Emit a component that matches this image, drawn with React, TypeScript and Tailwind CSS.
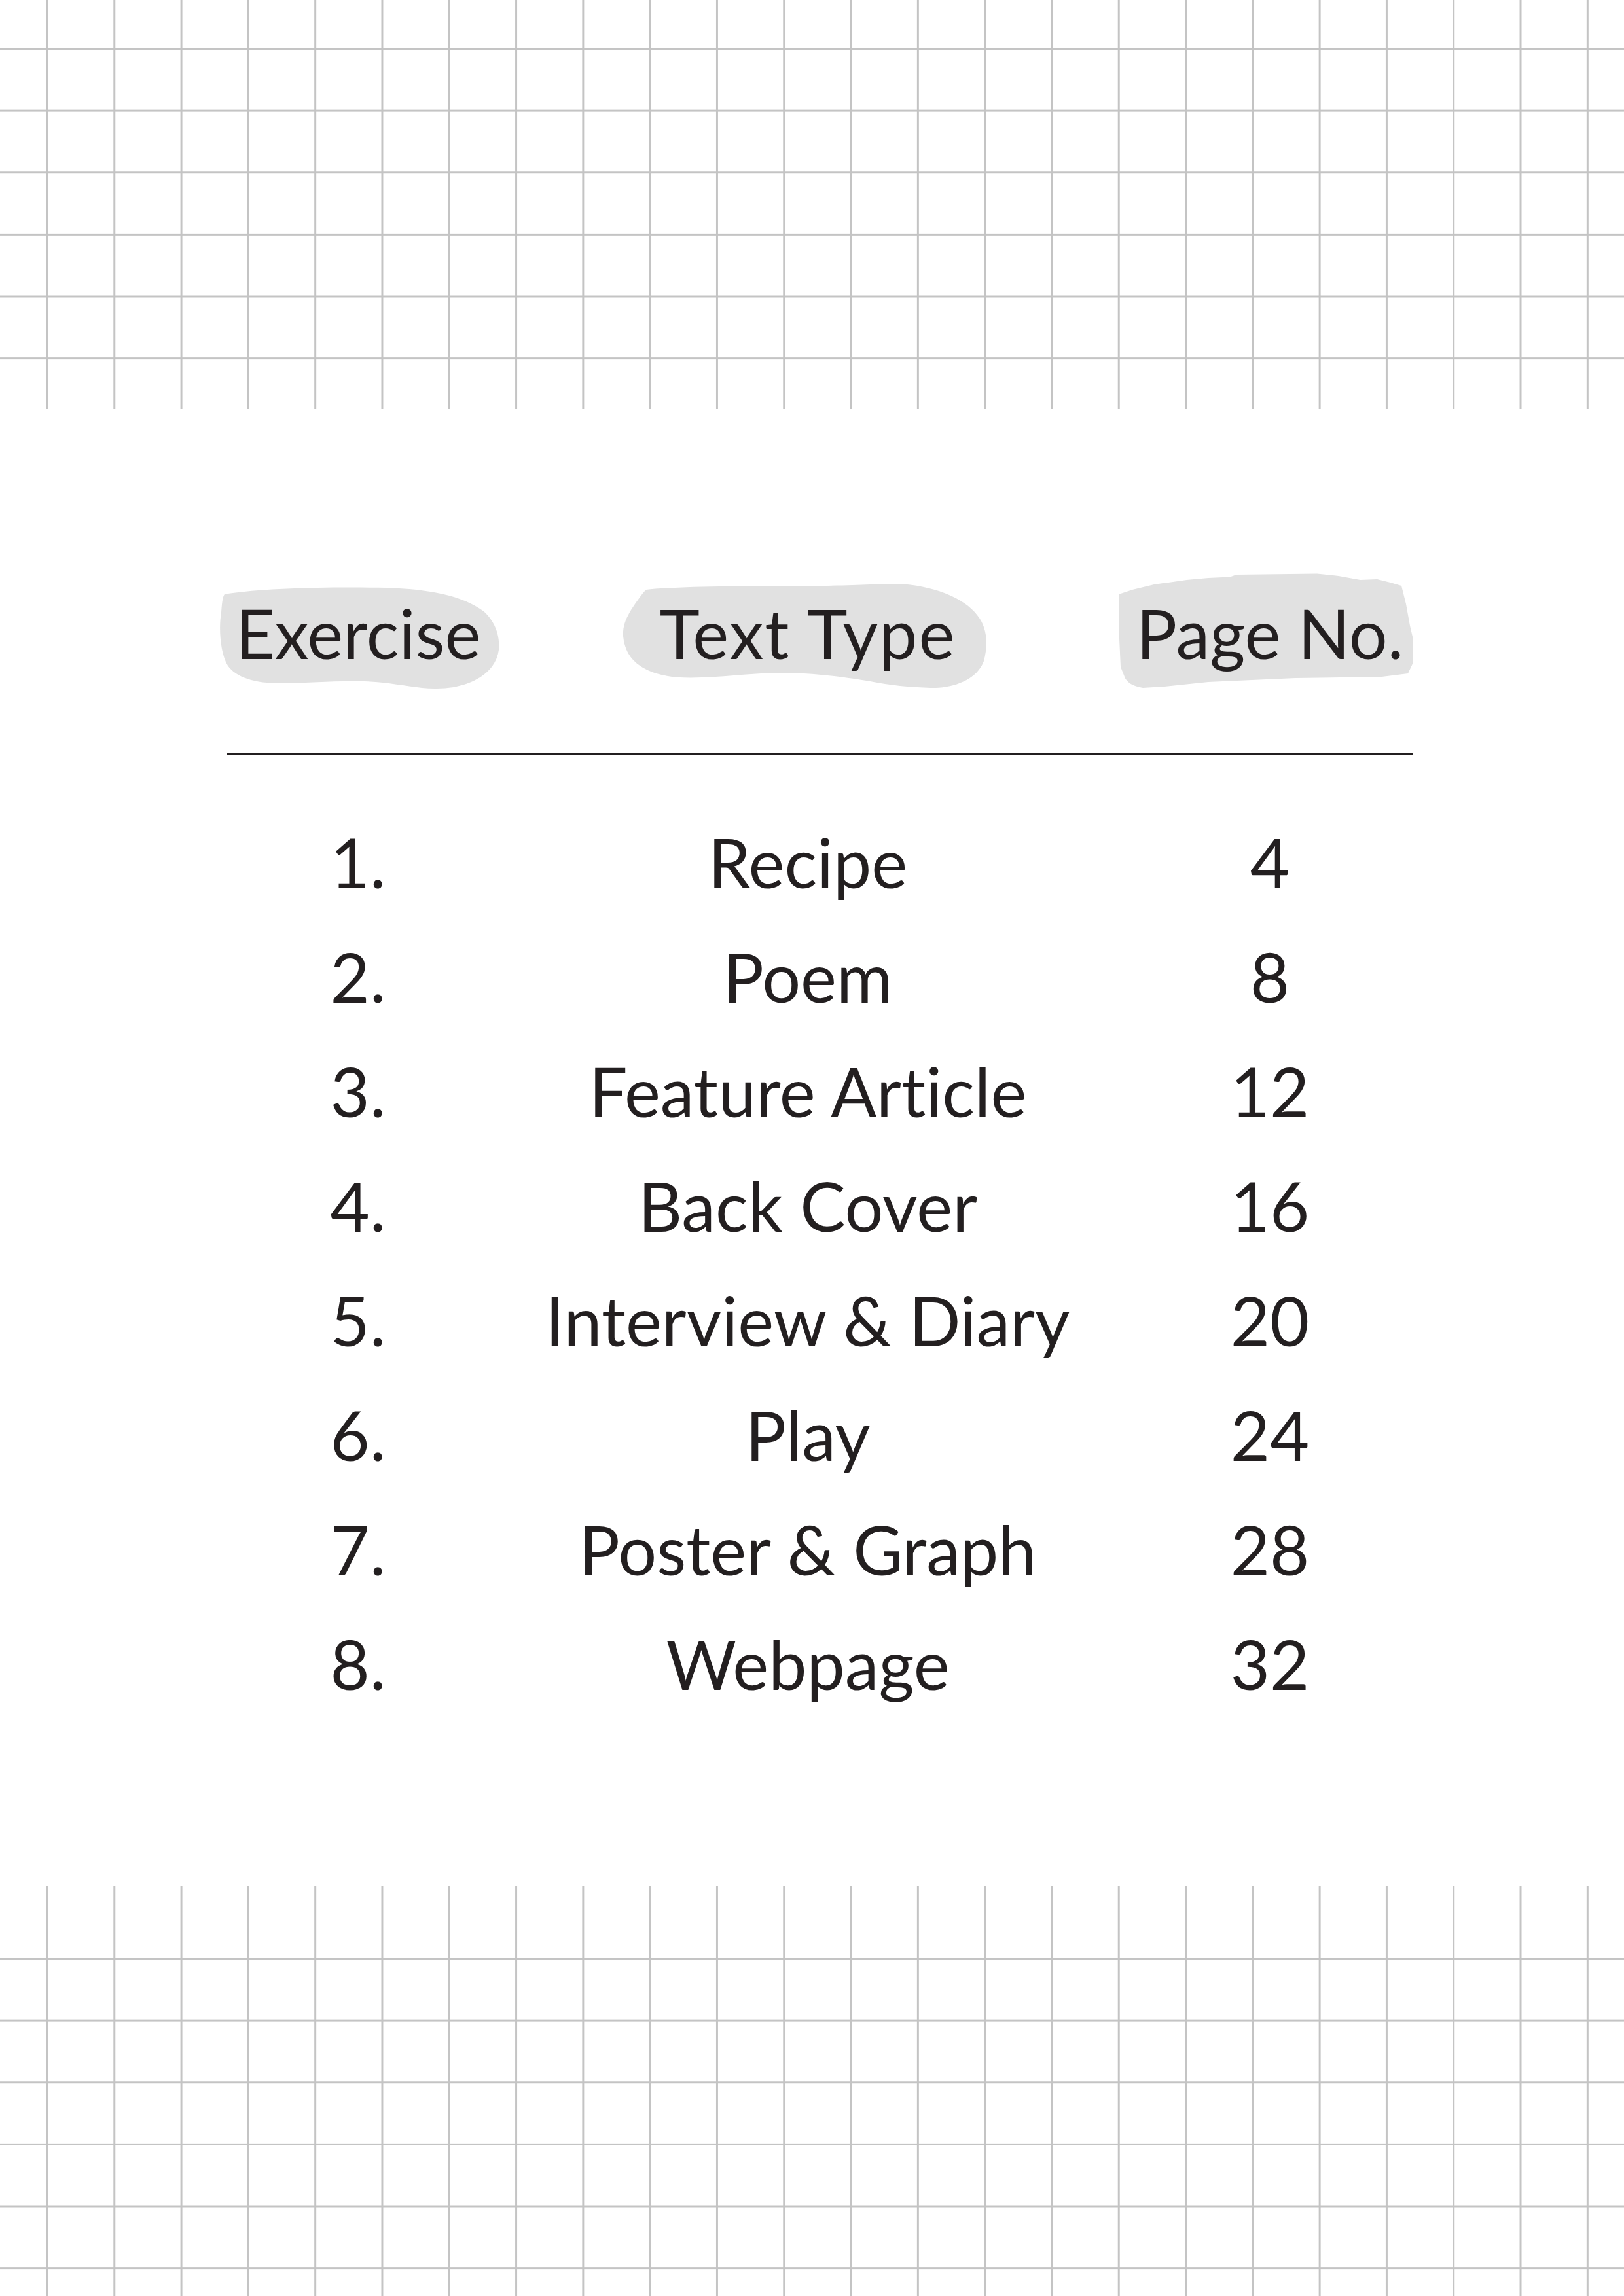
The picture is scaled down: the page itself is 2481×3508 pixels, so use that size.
const rows = [
  { no: "1.", type: "Recipe", page: "4" },
  { no: "2.", type: "Poem", page: "8" },
  { no: "3.", type: "Feature Article", page: "12" },
  { no: "4.", type: "Back Cover", page: "16" },
  { no: "5.", type: "Interview & Diary", page: "20" },
  { no: "6.", type: "Play", page: "24" },
  { no: "7.", type: "Poster & Graph", page: "28" },
  { no: "8.", type: "Webpage", page: "32" },
];

// grid paper: vertical lines every 102.3px, horizontal every 94.64px
const gridBoth =
  "bg-[linear-gradient(to_right,#c4c4c4_3px,transparent_3px),linear-gradient(to_bottom,#c4c4c4_3px,transparent_3px)] bg-size-[102.3px_94.64px]";
const gridVertical =
  "bg-[linear-gradient(to_right,#c4c4c4_3px,transparent_3px)] bg-size-[102.3px_100%]";

function Blob({ kind }: { kind: "a" | "b" | "c" }) {
  if (kind === "a") {
    return (
      <svg className="absolute left-[-12px] top-[17px]" width="428" height="156" viewBox="0 0 428 156">
        <path
          d="M8,12 C60,3 170,0 255,2 C320,4 372,14 404,38 C424,56 429,80 427,97 C423,126 398,146 358,154 C318,160 288,151 250,147 C205,142 150,147 100,148 C58,149 26,140 13,121 C1,101 -1,62 3,40 C4,26 5,16 8,12 Z"
          fill="#e1e1e1"
        />
      </svg>
    );
  }
  if (kind === "b") {
    return (
      <svg className="absolute left-[205px] top-[13px]" width="556" height="159" viewBox="0 0 556 159">
        <path
          d="M35,9 C80,4 180,3 284,3 C350,3 390,0 420,0 C470,2 520,20 541,48 C556,66 558,92 551,118 C541,146 505,160 470,159 C440,158 420,156 400,153 C370,148 320,138 254,136 C210,135 170,141 120,143 C80,145 50,140 30,128 C10,116 2,100 0,80 C-1,64 5,52 12,40 C20,28 28,16 35,9 Z"
          fill="#e1e1e1"
        />
      </svg>
    );
  }
  return (
    <svg className="absolute left-[-12px] top-[-3px]" width="450" height="176" viewBox="0 0 450 176">
      <path
        d="M0,32 L21,25 L54,17 L104,10 L137,7 L170,5.5 L180,2 L303,0.5 L336,4 L369,10 L395,9 L415,14 L432,19 L439,47 L445,80 L449,97 L450,136 L442,153 L402,158 L270,160 L137,166 L70,173 L37,175 C20,172 12,166 9,158 L3,143 L1,100 Z"
        fill="#e1e1e1"
      />
    </svg>
  );
}

export default function App() {
  return (
    <div className="w-[2481px] h-[3508px] bg-white flex flex-col font-['Lato','Liberation_Sans',sans-serif] [font-variant-ligatures:none] text-[#231f20] overflow-hidden">
      <div className={`h-[625px] shrink-0 ${gridBoth} bg-position-[71px_73px]`} />

      <div className="ml-[347px] w-[1812px] mt-[254px]">
        <div className="grid grid-cols-[400px_974px_438px] h-[175px] text-[104px] leading-[175px] text-center">
          <div className="relative">
            <Blob kind="a" />
            <span className="relative">Exercise</span>
          </div>
          <div className="relative">
            <Blob kind="b" />
            <span className="relative tracking-[2px]">Text Type</span>
          </div>
          <div className="relative">
            <Blob kind="c" />
            <span className="relative">Page No.</span>
          </div>
        </div>

        <div className="mt-[96px] h-[3px] bg-[#231f20]" />

        <div className="mt-[76px] flex flex-col">
          {rows.map((r) => (
            <div key={r.no} className="grid grid-cols-[400px_974px_438px] h-[175px] text-[104px] leading-[175px] text-center">
              <div>{r.no}</div>
              <div className="whitespace-nowrap">{r.type}</div>
              <div>{r.page}</div>
            </div>
          ))}
        </div>
      </div>

      <div className="flex-1" />

      <div className="h-[627px] shrink-0 flex flex-col">
        <div className={`h-[110px] shrink-0 ${gridVertical} bg-position-[71px_0px]`} />
        <div className={`flex-1 ${gridBoth} bg-position-[71px_0px]`} />
      </div>
    </div>
  );
}
